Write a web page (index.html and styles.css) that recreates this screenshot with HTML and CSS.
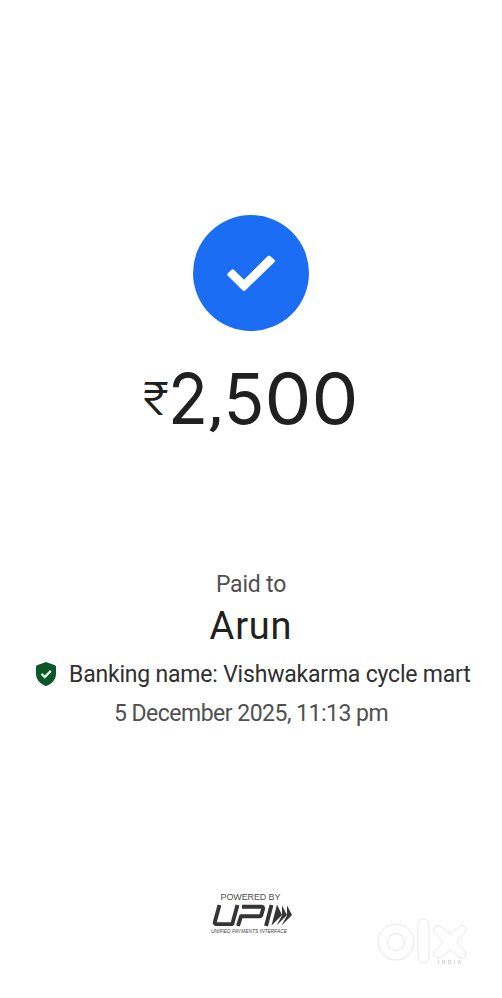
FILE: index.html
```html
<!DOCTYPE html>
<html lang="en">
<head>
<meta charset="utf-8">
<title>Payment receipt</title>
<link rel="stylesheet" href="styles.css">
</head>
<body>
<main class="receipt">
  <svg class="status" viewBox="0 0 116 116" role="img" aria-label="Paid">
    <circle cx="58" cy="58" r="58" fill="#1b6ef3"/>
    <path d="M34.800 58.200 38.500 54.700Q39.800 53.700 41 54.900L51 64.800 74.500 41.300Q76 40 77.500 41.300L81.300 44.800Q82.500 46 81.300 47.300L52.500 75.200Q51 76.500 49.500 75.200L34.800 60.800Q33.600 59.500 34.800 58.200Z" fill="#fff"/>
  </svg>
  <div class="amount"><svg viewBox="0 0 216 72" class="figure">
    <text class="currency" x="0" y="46.500" font-size="45" textLength="26" lengthAdjust="spacingAndGlyphs">₹</text>
    <text x="25" y="56" textLength="40" lengthAdjust="spacingAndGlyphs">2</text>
    <text class="comma" x="65.500" y="56" textLength="14" lengthAdjust="spacingAndGlyphs">,</text>
    <text x="80.500" y="56" textLength="41" lengthAdjust="spacingAndGlyphs">5</text>
    <text x="121.500" y="56" textLength="94" lengthAdjust="spacingAndGlyphs">00</text>
  </svg></div>
  <div class="label">Paid to</div>
  <h1 class="name">Arun</h1>
  <div class="bank">
    <svg class="shield" viewBox="0 0 20 24">
      <path d="M10 0 19 3.300Q20 3.700 20 5V11.500C20 17.500 16 22 10 24 4 22 0 17.500 0 11.500V5Q0 3.700 1 3.300Z" fill="#0b5728"/>
      <path d="M5.500 11.800 8.700 15 14.800 8.900" fill="none" stroke="#e2f8e6" stroke-width="2.300"/>
    </svg>
    <span class="bank-name">Banking name: Vishwakarma cycle mart</span>
  </div>
  <div class="date">5 December 2025, 11:13 pm</div>
  <footer class="footer">
    <svg class="upi" viewBox="0 0 84 48">
      <text x="10.500" y="10.500" textLength="60" font-size="9" fill="#505050">POWERED BY</text>
      <g transform="translate(0 2.500)">
        <g fill="none" stroke="#353535" stroke-width="3.900" stroke-linejoin="round">
          <path d="M9.500 13.500 4.800 30.500Q4.300 32.600 6.500 32.600H22.300L27.500 13.500"/>
          <path d="M28 34.500 31 24.800H49.500Q51 24.800 51.500 23L53 17.500Q53.500 15.300 51.500 15.300H32"/>
          <path d="M61.500 13.500 56 34.500"/>
        </g>
        <path d="M67 13 72 23.500 61.500 34ZM72 14 77 23.500 66.500 34 72 24ZM77 14 82 23.500 71.500 34 77 24Z" fill="#353535"/>
      </g>
      <text x="1" y="44" textLength="76" lengthAdjust="spacingAndGlyphs" font-size="5.500" font-style="italic" fill="#484848">UNIFIED PAYMENTS INTERFACE</text>
    </svg>
    <svg class="olx" viewBox="0 0 92 50">
      <g fill="#fff" stroke="#e7e7e7" stroke-width="1">
        <circle cx="19" cy="24" r="18"/>
        <circle cx="19" cy="24" r="8.500"/>
        <rect x="41" y="1" width="11" height="44" rx="5.500"/>
        <path d="M64 8.500 73 16 82 8.500Q84 7 86.500 7.500 90 9 89 13L80 24 88.500 34Q90 37 88 39.500 85 41 82 39.500L73 32 64 39.500Q61 41 58 39T57 34L66 24 57 14Q56 11 58 8.500 61 6.500 64 8.500Z"/>
      </g>
      <text x="61" y="46" textLength="23" font-size="5" font-weight="bold" fill="#d0d0d0">INDIA</text>
    </svg>
  </footer>
</main>
</body>
</html>
```
FILE: styles.css
```css
* { box-sizing: border-box; }
body { margin: 0; background: #fff; font-family: Roboto, "Liberation Sans", sans-serif; }
.receipt { width: 502px; height: 998px; padding-top: 215px; display: flex; flex-direction: column; align-items: center; overflow: hidden; background: #fff; }
.status { width: 116px; height: 116px; display: block; flex: none; }
.amount { height: 80px; margin-top: 29px; padding-top: 8px; }
.figure { display: block; width: 216px; height: 72px; overflow: visible; font-family: Inter, sans-serif; font-size: 70px; fill: #202020; }
.currency { font-weight: 300; }
.comma { font-family: Roboto, sans-serif; font-size: 62px; }
.label { height: 28px; margin-top: 131px; line-height: 28px; font-size: 23px; letter-spacing: -0.2px; color: #505050; }
.name { margin: 3px 0 0; height: 48px; line-height: 48px; font-size: 38px; font-weight: 400; letter-spacing: 0.8px; color: #202020; }
.bank { display: flex; align-items: center; width: 430px; height: 30px; margin: 10px 0 0; gap: 13px; }
.shield { width: 20px; height: 24px; flex: none; position: relative; top: -1px; }
.bank-name { font-size: 23px; line-height: 30px; letter-spacing: -0.2px; white-space: nowrap; color: #303030; }
.date { height: 30px; margin-top: 9px; line-height: 30px; font-size: 23px; letter-spacing: -0.51px; color: #505050; }
.footer { display: flex; width: 502px; margin-top: 160px; padding-left: 210px; gap: 83px; font-family: "Liberation Sans", sans-serif; }
.upi { width: 84px; height: 48px; display: block; overflow: visible; }
.olx { width: 92px; height: 50px; display: block; margin-top: 29px; }
```
